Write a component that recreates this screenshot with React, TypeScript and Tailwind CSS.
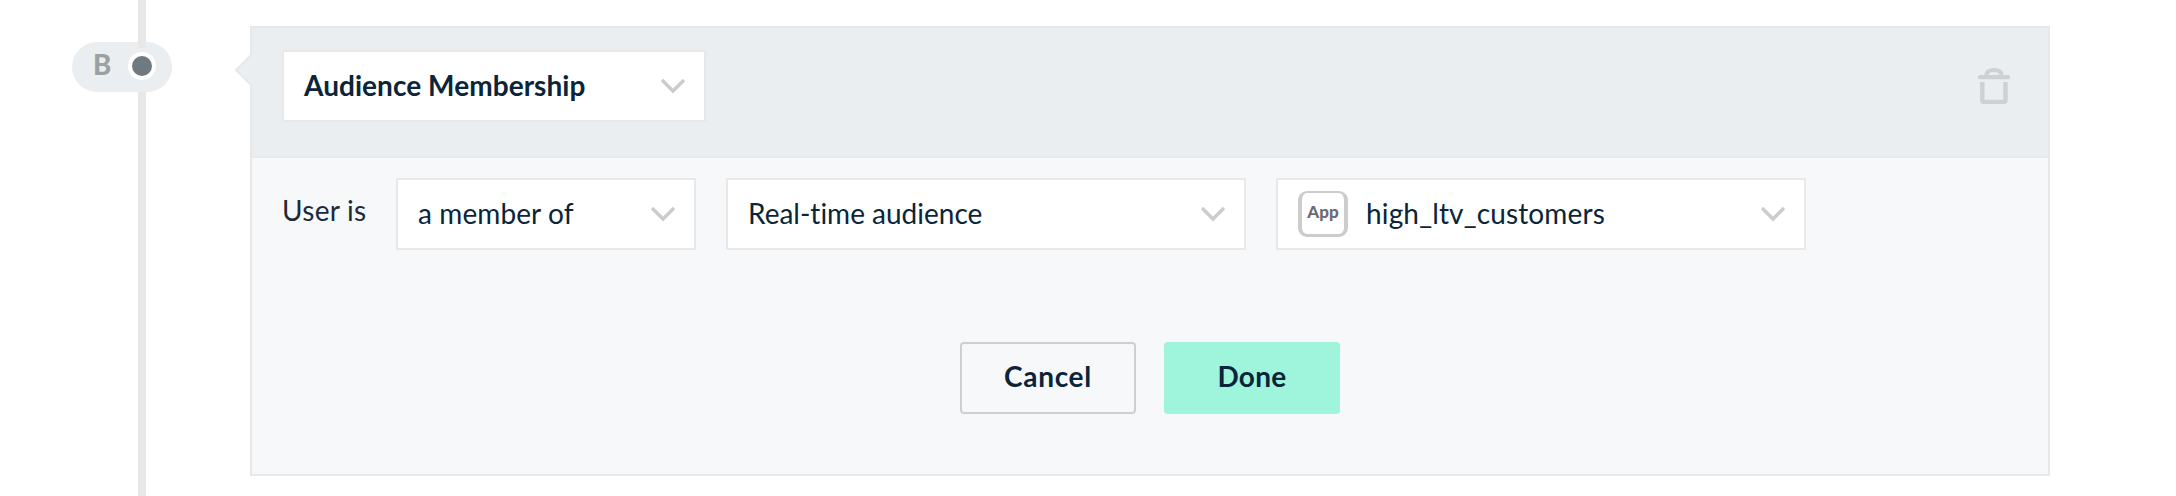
import type { ReactNode } from "react";

function Chevron() {
  return (
    <svg className="-mt-px h-[16px] w-[26px] shrink-0" viewBox="0 0 26 16" fill="none">
      <path d="M2 2 L13 13 L24 2" stroke="#cccccc" strokeWidth="3.4" />
    </svg>
  );
}

function Select({ className, children }: { className: string; children: ReactNode }) {
  return (
    <div className={`flex h-[72px] shrink-0 items-center justify-between border-2 border-[#e8e8e8] bg-white pl-5 pr-[18px] text-[#0a2539] ${className}`}>
      <div className="flex items-center">{children}</div>
      <Chevron />
    </div>
  );
}

function Timeline() {
  return (
    <div className="flex w-[250px] shrink-0 flex-col">
      <div className="ml-[138px] h-[42px] w-2 bg-[#e8e8e8]" />
      <div className="relative ml-[72px] flex h-[50px] w-[100px] items-center rounded-full bg-[#eaeef1] pl-[21px]">
        <span className="w-[35px] pb-1 text-[27.500px] leading-[46px] font-black text-[#9aa1a3]">B</span>
        <div className="-mt-[2px] size-7 shrink-0 rounded-full border-4 border-white bg-[#6f7a80]" />
        <div className="absolute left-[66px] top-0 h-[6px] w-2 bg-[#e8e8e8]" />
      </div>
      <div className="ml-[138px] w-2 grow bg-[#e8e8e8]" />
    </div>
  );
}

export default function App() {
  return (
    <div className="flex h-[496px] w-[2176px] overflow-hidden bg-white font-['Lato',sans-serif] text-[28px] leading-[34px] whitespace-nowrap [font-variant-ligatures:none]">
      <Timeline />
      <div className="relative mt-[26px] flex h-[450px] w-[1800px] flex-col border-2 border-[#e8e8e8] bg-[#f7f8fa]">
        <svg className="absolute -left-[18px] top-[26px] h-[32px] w-[19px]" viewBox="0 0 19 32">
          <path d="M18 0 V32 L1 16 Z" fill="#eaeef1" />
          <path d="M17 1 L2 16 L17 31" fill="none" stroke="#e8e8e8" strokeWidth="2" />
        </svg>
        <div className="flex h-[130px] justify-between border-b-2 border-[#e8e8e8] bg-[#eaeef1] pl-[30px] pr-[38px] pt-[22px]">
          <Select className="w-[424px]">
            <span className="pb-[3px] font-bold tracking-[0.05px]">Audience Membership</span>
          </Select>
          <svg className="mt-[18px] h-[36px] w-[32px]" viewBox="0 0 32 36" fill="none" stroke="#cdd1d4">
            <path d="M8.500 9 V7 Q8.500 2 16 2 T23.500 7 V9" strokeWidth="4" />
            <path d="M2 9.200 H30" strokeWidth="4.200" strokeLinecap="round" />
            <path d="M4.300 14 V32 Q4.300 33.900 6.200 33.900 H25.600 Q27.500 33.900 27.500 32 V14" strokeWidth="4.500" />
          </svg>
        </div>
        <div className="flex pl-[30px] pt-5">
          <span className="mt-[15px] w-[114px] tracking-[0.3px] text-[#1c2b3b]">User is</span>
          <Select className="w-[300px]">
            <span className="pb-[3px] tracking-[0.1px]">a member of</span>
          </Select>
          <Select className="ml-[30px] w-[520px]">
            <span className="pb-[3px]">Real-time audience</span>
          </Select>
          <Select className="ml-[30px] w-[530px]">
            <span className="mr-[18px] flex h-[46px] w-[50px] items-center justify-center rounded-[9px] border-x-4 border-t-2 border-b-[3px] border-[#cccccc] pb-[3px] text-[17px] font-black text-[#6b6b76]">
              App
            </span>
            <span className="pb-[3px] tracking-[0.15px]">high_ltv_customers</span>
          </Select>
        </div>
        <div className="mt-[92px] flex justify-center gap-7 font-bold text-[#0a2539]">
          <button className="h-[72px] w-[176px] rounded border-2 border-[#cdd0d3] pb-1 tracking-[0.7px]">Cancel</button>
          <button className="h-[72px] w-[176px] rounded bg-[#9ef5dc] pb-1 tracking-[0.3px]">Done</button>
        </div>
      </div>
    </div>
  );
}
